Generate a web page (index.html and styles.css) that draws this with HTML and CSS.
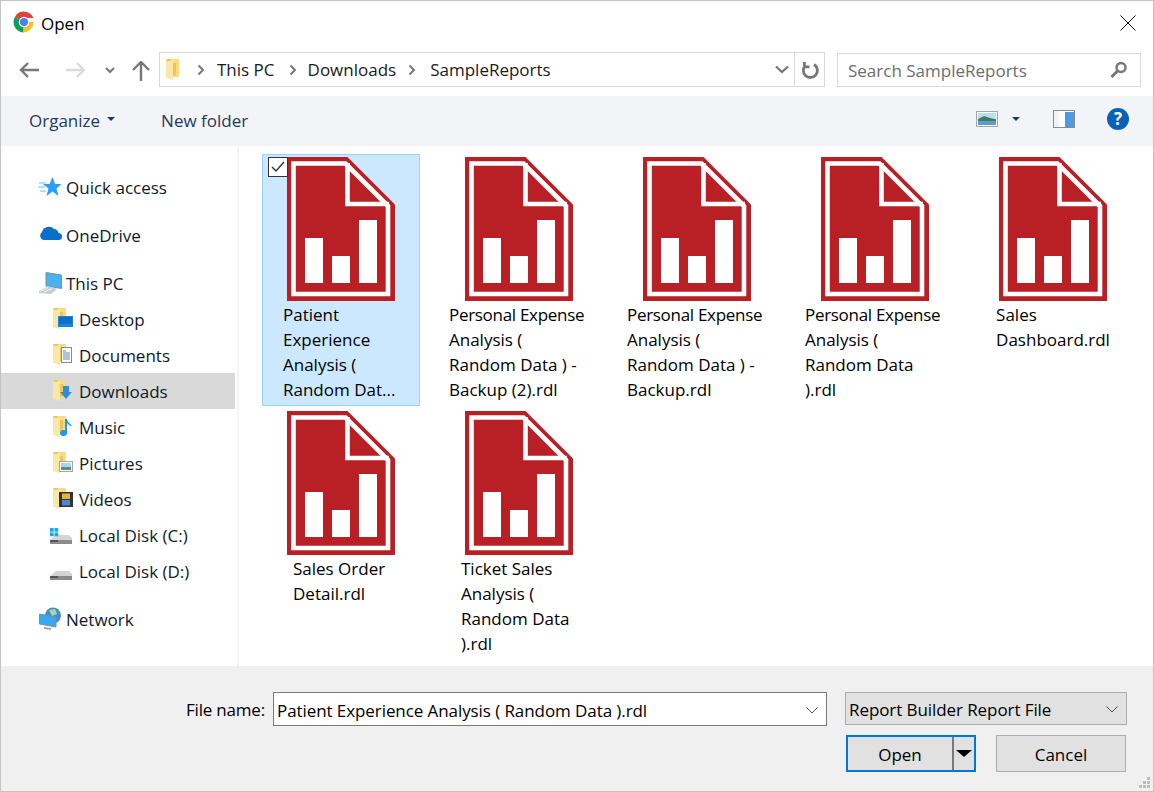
FILE: index.html
```html
<!DOCTYPE html>
<html lang="en">
<head>
    <meta charset="UTF-8">
    <title>Open</title>
    <link rel="stylesheet" href="styles.css">
</head>
<body>
    <svg class="defs" width="0" height="0">
        <symbol id="report" viewBox="0 0 108 144">
            <path d="M0 0H60.5L108 47.5V144H0Z" fill="#b92025"/>
            <path d="M6.5 6.5H58.5L101 49V137H6.5Z" fill="none" stroke="#fff" stroke-width="4.6"/>
            <path d="M60.5 6V47H102" fill="none" stroke="#fff" stroke-width="4.6"/>
            <path d="M18 81H36V126H18ZM45 99H63V126H45ZM72 63H90V126H72Z" fill="#fff"/>
        </symbol>
        <symbol id="folder" viewBox="0 0 24 24">
            <path d="M3 1H16V19H3Z" fill="#f8dc85"/>
            <path d="M3 1H8V19L13 17V5H8Z" fill="#eec45b"/>
            <path d="M3 4L10 2V22L3 20Z" fill="#fbe7a6"/>
        </symbol>
        <symbol id="drive" viewBox="0 0 24 24">
            <path d="M0 17L6 12H19L22 15V19L0 21Z" fill="#d4d4d4"/>
            <path d="M0 17H22V21H0Z" fill="#8c8c8c"/>
            <rect x="0" y="17" width="8" height="2" fill="#555"/>
        </symbol>
    </svg>

    <div class="dialog">
        <div class="titlebar">
            <svg class="chrome" width="22" height="22" viewBox="0 0 24 24">
                <path d="M12 12L2 6.500A11.500 11.500 0 0 1 22.500 7.500H12Z" fill="#db4437"/>
                <path d="M12 12H22.500A11.500 11.500 0 0 1 11 23.500L12 12Z" fill="#fbc02d"/>
                <path d="M12 12L11 23.500A11.500 11.500 0 0 1 2 6.500Z" fill="#0f9d58"/>
                <circle cx="12" cy="12" r="5.800" fill="#fff"/>
                <circle cx="12" cy="12" r="4.400" fill="#4a80f0"/>
            </svg>
            <span class="title">Open</span>
            <svg class="close" width="16" height="16" viewBox="0 0 16 16"><path d="M.5.5L15.500 15.500M15.500.5L.5 15.500" stroke="#111" fill="none"/></svg>
        </div>

        <div class="navbar">
            <svg class="nav-back" width="20" height="16" viewBox="0 0 20 16"><path d="M9 1L2 8L9 15M2 8H20" stroke="#777" stroke-width="2.400" fill="none"/></svg>
            <svg class="nav-forward" width="20" height="16" viewBox="0 0 20 16"><path d="M11 1L18 8L11 15M18 8H0" stroke="#dcdcdc" stroke-width="2.400" fill="none"/></svg>
            <svg class="nav-recent" width="10" height="7" viewBox="0 0 10 7"><path d="M1 1L5 5L9 1" stroke="#777" stroke-width="2" fill="none"/></svg>
            <svg class="nav-up" width="18" height="20" viewBox="0 0 18 20"><path d="M1 9L9 1L17 9M9 1V20" stroke="#777" stroke-width="2.400" fill="none"/></svg>
            <div class="address">
                <svg class="address-folder" width="24" height="24"><use href="#folder"/></svg>
                <svg class="crumb-arrow first" width="8" height="12" viewBox="0 0 8 12"><path d="M1.500 1.500L6 6L1.500 10.500" stroke="#777" stroke-width="2" fill="none"/></svg>
                <span>This PC</span>
                <svg class="crumb-arrow" width="8" height="12" viewBox="0 0 8 12"><path d="M1.500 1.500L6 6L1.500 10.500" stroke="#777" stroke-width="2" fill="none"/></svg>
                <span>Downloads</span>
                <svg class="crumb-arrow last" width="8" height="12" viewBox="0 0 8 12"><path d="M1.500 1.500L6 6L1.500 10.500" stroke="#777" stroke-width="2" fill="none"/></svg>
                <span>SampleReports</span>
                <svg class="address-drop" width="14" height="9" viewBox="0 0 14 9"><path d="M1 1.500L7 7L13 1.500" stroke="#777" stroke-width="2.200" fill="none"/></svg>
                <div class="refresh">
                    <svg width="18" height="18" viewBox="0 0 18 18"><path d="M5 4A7 7 0 1 0 13 3.500M3.500 1V5.800H8.500" stroke="#777" stroke-width="2.800" fill="none"/></svg>
                </div>
            </div>
            <div class="search">
                <span>Search SampleReports</span>
                <svg width="18" height="18" viewBox="0 0 18 18"><circle cx="11" cy="6.500" r="4.500" stroke="#777" stroke-width="2.400" fill="none"/><path d="M7.500 10L1.500 16" stroke="#777" stroke-width="3" fill="none"/></svg>
            </div>
        </div>

        <div class="toolbar">
            <span class="organize">Organize</span>
            <span class="caret"></span>
            <span class="new-folder">New folder</span>
            <svg class="view-icon" width="22" height="16" viewBox="0 0 22 16">
                <rect x=".5" y=".5" width="21" height="15" fill="#fff" stroke="#a5a5a5"/>
                <rect x="2" y="2" width="18" height="5" fill="#bcdcf2"/>
                <path d="M2 8L8 5L14 7L20 8V10H2Z" fill="#3f7a63"/>
                <rect x="2" y="10" width="18" height="4" fill="#5b9ecb"/>
            </svg>
            <span class="caret view-caret"></span>
            <svg class="pane-icon" width="22" height="18" viewBox="0 0 22 18">
                <rect x=".5" y=".5" width="21" height="17" fill="#fff" stroke="#8a8a8a"/>
                <rect x="1" y="1" width="5" height="16" fill="#f2f2f2"/>
                <rect x="12" y="2" width="9" height="15" fill="#4b9ae2"/>
            </svg>
            <span class="help">?</span>
        </div>

        <div class="main">
            <nav class="sidebar">
                <div class="group">
                    <div class="nav-row">
                        <svg class="nav-icon" width="24" height="24" viewBox="0 0 24 24"><path d="M14.500 2L17 9H23.500L18.500 13.500L20.500 21L14.500 16.500L8.500 21L10.500 13.500L5 9H11.500Z" fill="#2a9df4"/><path d="M1 8H8M0 12H7M2 16H8" stroke="#9fd3f8" stroke-width="1.300"/></svg>
                        <span>Quick access</span>
                    </div>
                </div>
                <div class="group">
                    <div class="nav-row">
                        <svg class="nav-icon" width="24" height="24" viewBox="0 0 24 24"><path d="M5.500 17A4.500 4.500 0 0 1 4 9A7 7 0 0 1 16 6A5 5 0 0 1 20.500 10A3.500 3.500 0 0 1 20.500 17Z" fill="#0a6fc9"/></svg>
                        <span>OneDrive</span>
                    </div>
                </div>
                <div class="group">
                    <div class="nav-row">
                        <svg class="nav-icon" width="24" height="24" viewBox="0 0 24 24"><path d="M8 1.500L23.500 4V17.500L8 15Z" fill="#4ab2ee" stroke="#7f8f9a"/><path d="M1 20L10 15L19 18L13 23L1 22Z" fill="#c9ced2"/><path d="M2 20.500L10 16.500M6 21L14 17.500" stroke="#f0f0f0"/></svg>
                        <span>This PC</span>
                    </div>
                    <div class="nav-row child">
                        <svg class="nav-icon" width="24" height="24" viewBox="0 0 24 24"><use href="#folder"/><rect x="8" y="9" width="15" height="11" fill="#1a86d8"/><rect x="9" y="10" width="13" height="7" fill="#0a6fc9"/></svg>
                        <span>Desktop</span>
                    </div>
                    <div class="nav-row child">
                        <svg class="nav-icon" width="24" height="24" viewBox="0 0 24 24"><use href="#folder"/><rect x="11.500" y="4.500" width="10" height="15" fill="#fff" stroke="#8a8a8a"/><path d="M13 8H16M13 10H20M13 12H20M13 14H20M13 16H20" stroke="#5c88b0"/></svg>
                        <span>Documents</span>
                    </div>
                    <div class="nav-row child selected">
                        <svg class="nav-icon" width="24" height="24" viewBox="0 0 24 24"><use href="#folder"/><path d="M13 7H19V13H22L16 20L10 13H13Z" fill="#2d8fdc"/></svg>
                        <span>Downloads</span>
                    </div>
                    <div class="nav-row child">
                        <svg class="nav-icon" width="24" height="24" viewBox="0 0 24 24"><use href="#folder"/><path d="M16 4V18" stroke="#1a9bf0" stroke-width="2"/><path d="M16 4Q17 8 21 11" stroke="#1a9bf0" stroke-width="1.500" fill="none"/><ellipse cx="13.500" cy="18" rx="3.500" ry="3" fill="#1a9bf0"/></svg>
                        <span>Music</span>
                    </div>
                    <div class="nav-row child">
                        <svg class="nav-icon" width="24" height="24" viewBox="0 0 24 24"><use href="#folder"/><rect x="9.500" y="10.500" width="13" height="10" fill="#fff" stroke="#a5a5a5"/><rect x="11" y="12" width="10" height="4" fill="#a9d3ef"/><rect x="11" y="16" width="10" height="3" fill="#5a9272"/></svg>
                        <span>Pictures</span>
                    </div>
                    <div class="nav-row child">
                        <svg class="nav-icon" width="24" height="24" viewBox="0 0 24 24"><use href="#folder"/><rect x="9" y="5" width="14" height="15" fill="#333"/><rect x="12" y="6.500" width="8" height="5.500" fill="#e5b53a"/><rect x="12" y="13" width="8" height="5.500" fill="#4f86d6"/></svg>
                        <span>Videos</span>
                    </div>
                    <div class="nav-row child">
                        <svg class="nav-icon" width="24" height="24"><use href="#drive"/><path d="M0 5H3.700V8.700H0ZM4.500 5H8.200V8.700H4.500ZM0 9.500H3.700V13.200H0ZM4.500 9.500H8.200V13.200H4.500Z" fill="#12a9ee"/></svg>
                        <span>Local Disk (C:)</span>
                    </div>
                    <div class="nav-row child">
                        <svg class="nav-icon" width="24" height="24"><use href="#drive"/></svg>
                        <span>Local Disk (D:)</span>
                    </div>
                </div>
                <div class="group">
                    <div class="nav-row">
                        <svg class="nav-icon" width="24" height="24" viewBox="0 0 24 24"><circle cx="15" cy="8.500" r="8" fill="#3f8fcf"/><path d="M11 3L17 2L19 7L14 9Z" fill="#a8d8a8"/><path d="M1.500 7L18 10V20L1.500 17Z" fill="#38a8f0" stroke="#7f8f9a"/><path d="M6 21L13 22" stroke="#9aa" stroke-width="2"/></svg>
                        <span>Network</span>
                    </div>
                </div>
            </nav>

            <div class="files">
                <div class="tile selected">
                    <span class="check"><svg width="14" height="12" viewBox="0 0 14 12"><path d="M1 6L5 10L13 1" stroke="#333" stroke-width="1.400" fill="none"/></svg></span>
                    <svg class="report" width="108" height="144"><use href="#report"/></svg>
                    <div class="file-name name-long">Patient<br>Experience<br>Analysis (<br>Random Dat...</div>
                </div>
                <div class="tile">
                    <svg class="report" width="108" height="144"><use href="#report"/></svg>
                    <div class="file-name name-wide"><span class="tight">Personal Expense</span><br>Analysis (<br>Random Data ) -<br>Backup (2).rdl</div>
                </div>
                <div class="tile">
                    <svg class="report" width="108" height="144"><use href="#report"/></svg>
                    <div class="file-name name-wide"><span class="tight">Personal Expense</span><br>Analysis (<br>Random Data ) -<br>Backup.rdl</div>
                </div>
                <div class="tile">
                    <svg class="report" width="108" height="144"><use href="#report"/></svg>
                    <div class="file-name name-wide"><span class="tight">Personal Expense</span><br>Analysis (<br>Random Data<br>).rdl</div>
                </div>
                <div class="tile">
                    <svg class="report" width="108" height="144"><use href="#report"/></svg>
                    <div class="file-name">Sales<br>Dashboard.rdl</div>
                </div>
                <div class="tile">
                    <svg class="report" width="108" height="144"><use href="#report"/></svg>
                    <div class="file-name name-short">Sales Order<br>Detail.rdl</div>
                </div>
                <div class="tile">
                    <svg class="report" width="108" height="144"><use href="#report"/></svg>
                    <div class="file-name name-long">Ticket Sales<br>Analysis (<br>Random Data<br>).rdl</div>
                </div>
            </div>
        </div>

        <div class="footer">
            <div class="footer-row">
                <span class="file-label">File name:</span>
                <div class="name-input">
                    <span>Patient Experience Analysis ( Random Data ).rdl</span>
                    <svg width="12" height="7" viewBox="0 0 12 7"><path d="M.5.500L6 6L11.500.500" stroke="#555" fill="none"/></svg>
                </div>
                <div class="type-select">
                    <span>Report Builder Report File</span>
                    <svg width="12" height="7" viewBox="0 0 12 7"><path d="M.5.500L6 6L11.500.500" stroke="#555" fill="none"/></svg>
                </div>
            </div>
            <div class="footer-buttons">
                <div class="btn open-btn">
                    <span class="open-label">Open</span>
                    <span class="open-split"><span class="open-arrow"></span></span>
                </div>
                <div class="btn cancel-btn">Cancel</div>
            </div>
            <svg class="grip" width="12" height="12" viewBox="0 0 12 12"><path d="M8 0h3v3H8ZM4 4h3v3H4ZM8 4h3v3H8ZM0 8h3v3H0ZM4 8h3v3H4ZM8 8h3v3H8Z" fill="#bcbcbc"/></svg>
        </div>
    </div>
</body>
</html>
```

FILE: styles.css
```css
html, body {
    margin: 0;
    padding: 0;
}
body {
    width: 1154px;
    height: 792px;
    overflow: hidden;
    background: #fff;
    font-family: "Open Sans", "Noto Sans", sans-serif;
    font-size: 17px;
    color: #000;
}
.defs {
    position: absolute;
}
.dialog {
    width: 1154px;
    height: 792px;
    box-sizing: border-box;
    border: 1px solid #c4c4c4;
    display: flex;
    flex-direction: column;
}

/* title bar */
.titlebar {
    height: 45px;
    display: flex;
    align-items: center;
    padding: 0 17px 0 12px;
    flex: none;
}
.chrome {
    margin-bottom: 3px;
}
.title {
    margin-left: 6px;
    margin-bottom: 1px;
}
.close {
    margin-left: auto;
    margin-bottom: 2px;
}

/* back / forward / address / search */
.navbar {
    height: 50px;
    flex: none;
    display: flex;
    align-items: flex-start;
}
.nav-back {
    margin: 16px 0 0 18px;
}
.nav-forward {
    margin: 16px 0 0 27px;
}
.nav-recent {
    margin: 21px 0 0 19px;
}
.nav-up {
    margin: 15px 0 0 17px;
}
.address {
    margin: 6px 0 0 9px;
    width: 666px;
    height: 35px;
    box-sizing: border-box;
    border: 1px solid #d9d9d9;
    display: flex;
    align-items: center;
    padding-left: 3px;
    color: #1a1a1a;
}
.address-folder {
    flex: none;
}
.crumb-arrow {
    margin: 0 11px 0 14px;
    flex: none;
}
.crumb-arrow.first {
    margin: 0 12px 0 10px;
}
.crumb-arrow.last {
    margin: 0 14px 0 12px;
}
.address-drop {
    margin-left: auto;
    margin-right: 5px;
}
.refresh {
    width: 29px;
    height: 33px;
    border-left: 1px solid #d9d9d9;
    display: flex;
    align-items: center;
    justify-content: center;
}
.search {
    margin: 7px 0 0 12px;
    width: 304px;
    height: 34px;
    box-sizing: border-box;
    border: 1px solid #d9d9d9;
    display: flex;
    align-items: center;
    justify-content: space-between;
    padding: 0 12px 0 10px;
    color: #6d6d6d;
}

/* command bar */
.toolbar {
    height: 50px;
    box-sizing: border-box;
    padding-bottom: 4px;
    flex: none;
    background: #f3f4f7;
    display: flex;
    align-items: center;
    color: #1e3a5f;
}
.organize {
    margin: 2px 0 0 28px;
}
.caret {
    width: 0;
    height: 0;
    border-left: 4px solid transparent;
    border-right: 4px solid transparent;
    border-top: 4px solid #1e3a5f;
    margin-left: 7px;
}
.new-folder {
    margin: 2px 0 0 46px;
}
.view-icon {
    margin-left: auto;
}
.view-caret {
    margin-left: 14px;
}
.pane-icon {
    margin-left: 33px;
}
.help {
    width: 22px;
    height: 22px;
    margin: 0 24px 0 32px;
    border-radius: 50%;
    background: #0a62b8;
    color: #fff;
    font-weight: 700;
    font-size: 17px;
    line-height: 22px;
    text-align: center;
}

/* sidebar and file area */
.main {
    height: 520px;
    flex: none;
    display: flex;
}
.sidebar {
    width: 236px;
    flex: none;
    border-right: 2px solid #f4f4f4;
    padding-top: 23px;
    color: #0f1a2a;
}
.group {
    margin-bottom: 12px;
}
.nav-row {
    height: 36px;
    width: 234px;
    display: flex;
    align-items: center;
    padding-left: 37px;
    box-sizing: border-box;
}
.nav-row.child {
    padding-left: 49px;
}
.nav-row.selected {
    background: #d9d9d9;
}
.nav-icon {
    flex: none;
    margin-right: 4px;
}
.child .nav-icon {
    margin-right: 5px;
}

.files {
    padding: 8px 0 0 23px;
    display: grid;
    grid-template-columns: repeat(5, 158px);
    grid-auto-rows: 252px;
    column-gap: 20px;
    row-gap: 2px;
    align-content: start;
}
.tile {
    position: relative;
    box-sizing: border-box;
    width: 158px;
    height: 252px;
    border: 1px solid transparent;
    padding-top: 2px;
    display: flex;
    flex-direction: column;
    align-items: center;
}
.tile.selected {
    background: #cce8ff;
    border-color: #99d1ff;
}
.report {
    flex: none;
}
.file-name {
    line-height: 25px;
    margin-top: 1px;
}
.name-long {
    width: 116px;
}
.name-wide {
    width: 140px;
}
.name-short {
    width: 96px;
}
.tight {
    letter-spacing: -0.3px;
}
.check {
    position: absolute;
    left: 5px;
    top: 2px;
    width: 20px;
    height: 20px;
    box-sizing: border-box;
    border: 1px solid #333;
    background: #fff;
    display: flex;
    align-items: center;
    justify-content: center;
}

/* bottom */
.footer {
    position: relative;
    flex: 1;
    background: #f0f0f0;
    padding-top: 26px;
}
.footer-row {
    display: flex;
    align-items: flex-start;
    height: 34px;
    letter-spacing: -0.08px;
}
.file-label {
    margin-left: 185px;
    width: 87px;
    line-height: 36px;
    letter-spacing: -0.2px;
}
.name-input {
    width: 554px;
    height: 34px;
    box-sizing: border-box;
    background: #fff;
    border: 1px solid #7a7a7a;
    display: flex;
    align-items: center;
    justify-content: space-between;
    padding: 2px 8px 0 3px;
}
.type-select {
    margin-left: 18px;
    width: 282px;
    height: 33px;
    box-sizing: border-box;
    background: #e1e1e1;
    border: 1px solid #adadad;
    display: flex;
    align-items: center;
    justify-content: space-between;
    padding: 2px 8px 0 3px;
}
.footer-buttons {
    display: flex;
    margin: 9px 0 0 845px;
}
.btn {
    width: 130px;
    height: 37px;
    box-sizing: border-box;
    background: #e1e1e1;
    border: 1px solid #adadad;
    display: flex;
    align-items: center;
    justify-content: center;
    padding-top: 2px;
}
.open-btn {
    border: 2px solid #0078d7;
    justify-content: flex-start;
    padding-top: 0;
}
.open-label {
    width: 104px;
    padding-top: 2px;
    text-align: center;
}
.open-split {
    height: 33px;
    width: 22px;
    box-sizing: border-box;
    border-left: 2px solid #7a7a7a;
    display: flex;
    align-items: center;
    justify-content: center;
}
.open-arrow {
    width: 0;
    height: 0;
    border-left: 8px solid transparent;
    border-right: 8px solid transparent;
    border-top: 7px solid #000;
}
.cancel-btn {
    margin-left: 20px;
}
.grip {
    position: absolute;
    right: 2px;
    bottom: 2px;
}
```
